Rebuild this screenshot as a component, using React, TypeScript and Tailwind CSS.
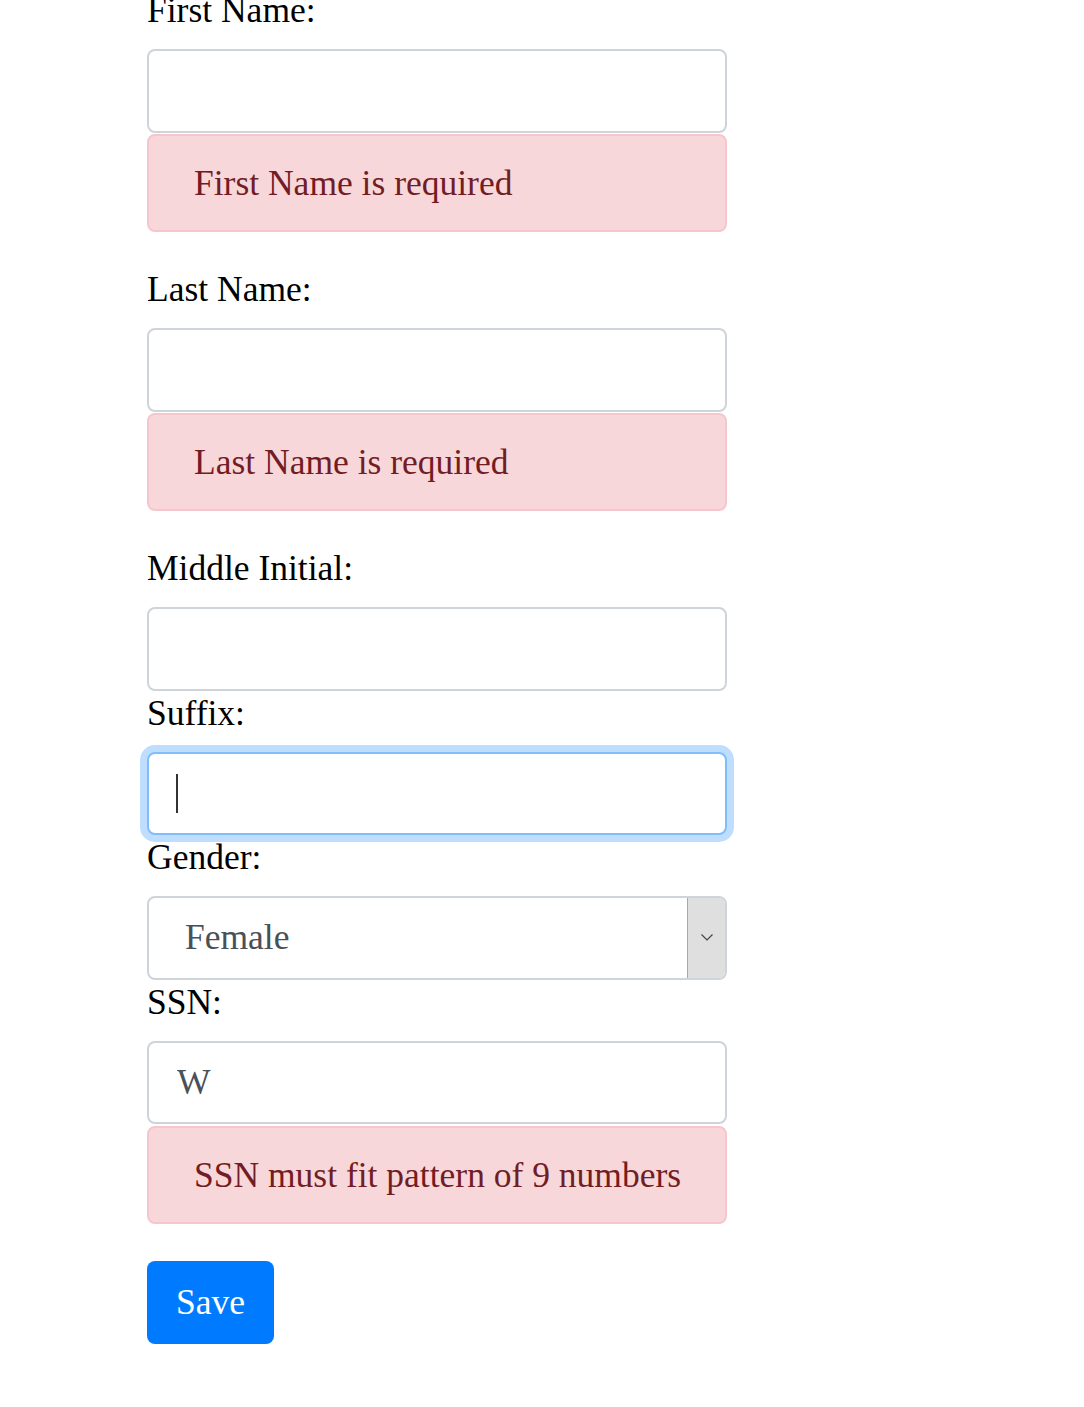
const serif = "font-['Liberation_Serif','Times_New_Roman',serif]";

function Label({ children }: { children: React.ReactNode }) {
  return <label className="block h-[52px] text-[35.5px] leading-[44px] mb-[9px] text-black">{children}</label>;
}

function TextInput({ value = "" }: { value?: string }) {
  return (
    <input
      readOnly
      value={value}
      className={`${serif} block w-full h-[83.5px] px-[28px] border-[2px] border-[#ced4da] rounded-[8px] bg-white text-[35.5px] text-[#495057] outline-none`}
    />
  );
}

function ErrorAlert({ text }: { text: string }) {
  return (
    <div className="mt-[1.5px] mb-[35px] h-[98px] flex items-center px-[45px] border-[2px] border-[#f5c6cb] bg-[#f8d7da] rounded-[8px] text-[#721c24] text-[35.5px] leading-[52px] whitespace-nowrap">
      {text}
    </div>
  );
}

export default function App() {
  return (
    <div className={`${serif} min-h-[1407px] bg-white overflow-hidden`}>
      <form className="ml-[147px] w-[580px] -mt-[12px] pb-[60px]" onSubmit={(e) => e.preventDefault()}>
        <Label>First Name:</Label>
        <TextInput />
        <ErrorAlert text="First Name is required" />

        <Label>Last Name:</Label>
        <TextInput />
        <ErrorAlert text="Last Name is required" />

        <Label>Middle Initial:</Label>
        <TextInput />

        <Label>Suffix:</Label>
        <div className="relative">
          <input
            readOnly
            className={`${serif} block w-full h-[83.5px] px-[28px] border-[2px] border-[#80bdff] rounded-[8px] bg-white text-[35.5px] text-[#495057] outline-none shadow-[0_0_0_7px_#bfdeff]`}
          />
          <span className="absolute left-[29px] top-[22px] w-[2px] h-[39px] bg-[#333]" />
        </div>

        <Label>Gender:</Label>
        <div className="flex h-[83.5px] border-[2px] border-[#ced4da] rounded-[8px] bg-white overflow-hidden">
          <div className="flex-1 flex items-center pl-[36px] text-[35.5px] text-[#495057]">Female</div>
          <div className="w-[38px] flex items-center justify-center bg-[#dfdfdf] border-l border-[#a9a9a9]">
            <svg width="14" height="9" viewBox="0 0 14 9" fill="none">
              <path d="M1.5 1.5l5.5 5.5 5.5-5.5" stroke="#444" strokeWidth="1.2" />
            </svg>
          </div>
        </div>

        <Label>SSN:</Label>
        <TextInput value="W" />
        <ErrorAlert text="SSN must fit pattern of 9 numbers" />

        <button
          type="submit"
          className={`${serif} mt-[2px] h-[83px] px-[29px] rounded-[8px] bg-[#007bff] text-white text-[35.5px] leading-[52px]`}
        >
          Save
        </button>
      </form>
    </div>
  );
}
